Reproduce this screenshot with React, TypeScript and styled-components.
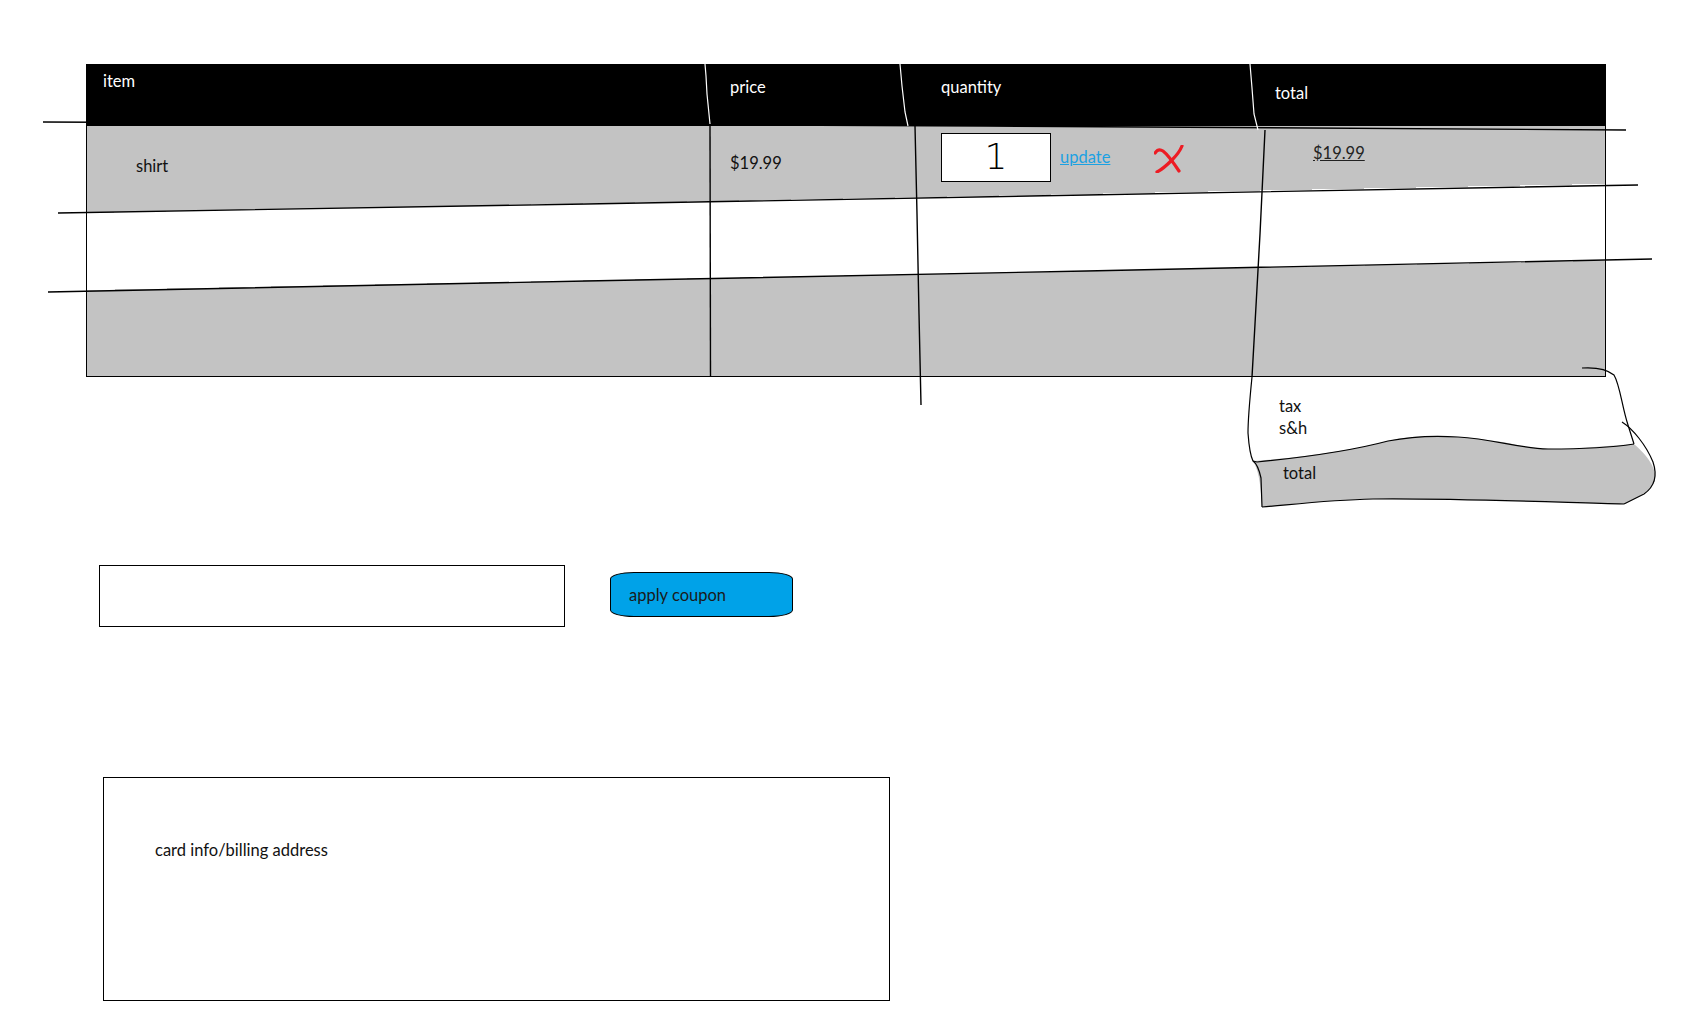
import React from 'react';
import styled, { createGlobalStyle } from 'styled-components';

const GRAY = '#c3c3c3';

const GlobalStyle = createGlobalStyle`
    html, body {
        margin: 0;
        padding: 0;
        background: #fff;
    }
    body {
        font-family: Lato, 'Open Sans', sans-serif;
        font-size: 16.5px;
        color: #111;
    }
`;

const cols = '622px 208px 342px 1fr';

function App() {
    return (
        <Page>
            <GlobalStyle />
            <CartTable>
                <HeaderRow>
                    <HeadCell $top={7} $left={16}>item</HeadCell>
                    <HeadCell $top={13} $left={21}>price</HeadCell>
                    <HeadCell $top={13} $left={24}>quantity</HeadCell>
                    <HeadCell $top={19} $left={16}>total</HeadCell>
                </HeaderRow>
                <Body>
                    <Cell $top={30} $left={49}>shirt</Cell>
                    <Cell $top={27} $left={21}>$19.99</Cell>
                    <QtyCell>
                        <QtyInput readOnly defaultValue="1" />
                        <UpdateLink href="#">update</UpdateLink>
                        <RemoveIcon viewBox="0 0 30 28" width="30" height="28">
                            <path d="M1 8 C 3 5, 6 4, 9 6 C 13 9, 19 17, 25 26" />
                            <path d="M28 1 C 26 6, 22 11, 18 15 C 13 20, 7 25, 3 27" />
                        </RemoveIcon>
                    </QtyCell>
                    <Cell $top={17} $left={54}>
                        <LineTotal>$19.99</LineTotal>
                    </Cell>
                </Body>
                <Sketch width="1519" height="313">
                    <g stroke="#000" strokeWidth="1.4" fill="none">
                        <polyline points="-43,58 400,60 900,62 1540,66" />
                        <polyline points="-28,149 500,140 1000,131 1552,121" />
                        <polyline points="-38,228 500,217 1000,207 1566,195" />
                        <polyline points="624,62 624.5,312" />
                        <polyline points="829,62 831,150 833,250 835,341" />
                        <polyline points="1179,66 1174,170 1169,260 1166,313" />
                    </g>
                    <g stroke="#fff" strokeWidth="1.2" fill="none">
                        <polyline points="619,0 620,12 621,30 624,60" />
                        <polyline points="814,0 816,22 819,48 822,62" />
                        <polyline points="1164,0 1166,24 1168,50 1172,66" />
                    </g>
                </Sketch>
            </CartTable>

            <Summary>
                <SummaryShape width="408" height="131">
                    <path
                        fill={GRAY}
                        d="M5 84 C 60 80, 110 72, 140 64 C 175 55, 220 60, 260 66 C 275 70, 290 72, 320 72 L 386 67 C 395 75, 404 84, 407 96 C 409 108, 400 116, 376 127 C 300 125, 200 121, 125 122 C 80 123, 40 128, 14 130 C 13 115, 12 95, 5 84 Z"
                    />
                    <g stroke="#000" strokeWidth="1.2" fill="none">
                        <path d="M334 -9 C 350 -10, 360 -7, 366 -2 C 372 8, 374 30, 380 48 L 386 67" />
                        <path d="M374 45 C 385 52, 398 68, 405 85 C 410 100, 406 110, 396 117 L 376 127" />
                        <path d="M386 67 C 360 71, 330 72, 300 72 C 270 71, 245 62, 210 60 C 180 58, 160 60, 140 64 C 110 72, 60 80, 9 85 L 5 84" />
                        <path d="M4 0 C 2 20, 0 40, 0 56 C 1 70, 3 80, 5 84 C 8 86, 11 92, 13 101 L 14 130" />
                        <path d="M14 130 C 40 128, 80 123, 125 122 C 200 121, 300 125, 376 127" />
                    </g>
                </SummaryShape>
                <SummaryLine>tax</SummaryLine>
                <SummaryLine>s&amp;h</SummaryLine>
                <SummaryTotal>total</SummaryTotal>
            </Summary>

            <CouponRow>
                <CouponInput />
                <CouponButton>apply coupon</CouponButton>
            </CouponRow>

            <CardBox>card info/billing address</CardBox>
        </Page>
    );
}

const Page = styled.div`
    width: 1688px;
    min-height: 1025px;
    box-sizing: border-box;
    padding: 64px 0 0 86px;
    display: flex;
    flex-direction: column;
    align-items: flex-start;
    overflow: hidden;
`;

const CartTable = styled.div`
    position: relative;
    width: 1520px;
    box-sizing: border-box;
    border-left: 1px solid #000;
    border-right: 1px solid #000;
    border-bottom: 1px solid #000;
`;

const HeaderRow = styled.div`
    display: grid;
    grid-template-columns: ${cols};
    height: 62px;
    background: #000;
    color: #fff;
`;

const HeadCell = styled.div<{ $top: number; $left: number }>`
    padding: ${(p) => p.$top}px 0 0 ${(p) => p.$left}px;
    line-height: 20px;
`;

const Body = styled.div`
    display: grid;
    grid-template-columns: ${cols};
    grid-template-rows: 87px 77px 86px;
    background: linear-gradient(
        178.9deg,
        ${GRAY} 0 87px,
        #fff 87px 164px,
        ${GRAY} 164px
    );
`;

const Cell = styled.div<{ $top: number; $left: number }>`
    padding: ${(p) => p.$top}px 0 0 ${(p) => p.$left}px;
    line-height: 20px;
    color: #111;
`;

const QtyCell = styled.div`
    display: flex;
    align-items: flex-start;
    padding: 7px 0 0 24px;
`;

const QtyInput = styled.input`
    width: 110px;
    height: 49px;
    box-sizing: border-box;
    border: 1px solid #000;
    background: #fff;
    padding: 0 0 2px;
    margin: 0;
    font-family: 'DejaVu Sans', 'Liberation Sans', sans-serif;
    font-weight: 200;
    font-size: 36px;
    text-align: center;
    color: #000;
    outline: none;
`;

const UpdateLink = styled.a`
    width: 94px;
    margin: 14px 0 0 9px;
    line-height: 20px;
    color: #1ba1e2;
    text-decoration: underline;
`;

const RemoveIcon = styled.svg`
    margin-top: 12px;
    fill: none;
    stroke: #ed1c24;
    stroke-width: 3.2;
    stroke-linecap: round;
`;

const LineTotal = styled.span`
    text-decoration: underline;
    color: #222;
`;

const Sketch = styled.svg`
    position: absolute;
    left: -1px;
    top: 0;
    overflow: visible;
    pointer-events: none;
`;

const Summary = styled.div`
    position: relative;
    width: 408px;
    height: 130px;
    box-sizing: border-box;
    margin-left: 1162px;
    padding: 18px 0 0 31px;
    display: flex;
    flex-direction: column;
    align-items: flex-start;
`;

const SummaryShape = styled.svg`
    position: absolute;
    left: 0;
    top: 0;
    overflow: visible;
`;

const SummaryLine = styled.div`
    position: relative;
    line-height: 22px;
    color: #111;
`;

const SummaryTotal = styled(SummaryLine)`
    margin: 23px 0 0 4px;
`;

const CouponRow = styled.div`
    display: flex;
    align-items: flex-start;
    margin: 58px 0 0 13px;
`;

const CouponInput = styled.input`
    width: 466px;
    height: 62px;
    box-sizing: border-box;
    border: 1px solid #000;
    margin: 0;
    outline: none;
`;

const CouponButton = styled.button`
    width: 183px;
    height: 45px;
    margin: 7px 0 0 45px;
    padding: 0 0 0 18px;
    box-sizing: border-box;
    border: 1px solid #000;
    border-radius: 24px / 7px;
    background: #00a2e8;
    color: #1a1a1a;
    font-family: Lato, 'Open Sans', sans-serif;
    font-size: 16.5px;
    text-align: left;
`;

const CardBox = styled.div`
    width: 787px;
    height: 224px;
    box-sizing: border-box;
    border: 1px solid #000;
    margin: 150px 0 0 17px;
    padding: 62px 0 0 51px;
    line-height: 20px;
    color: #111;
`;

export default App;
